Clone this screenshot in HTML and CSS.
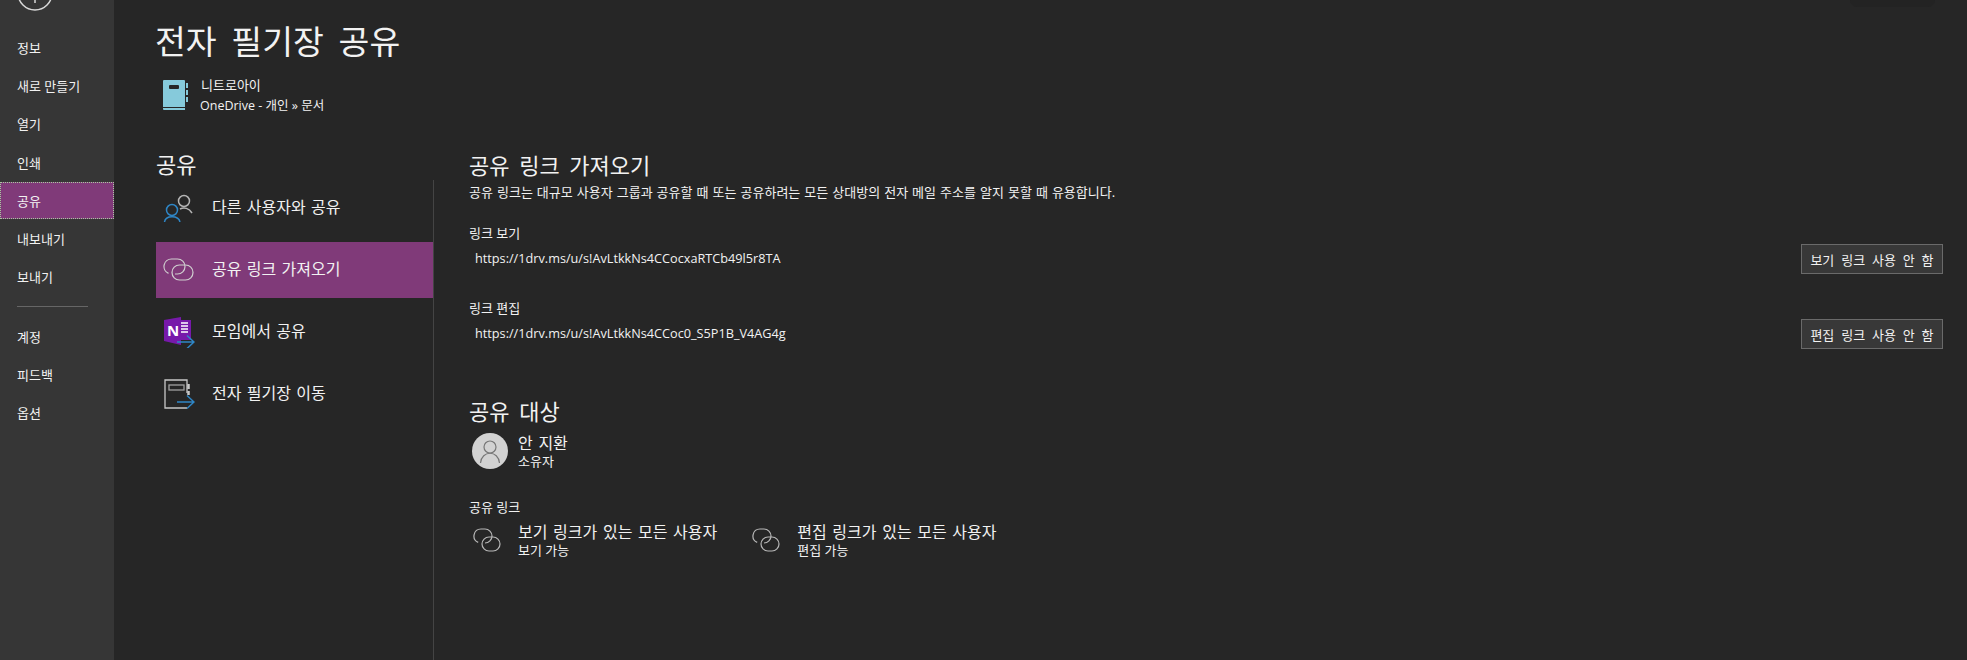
FILE: index.html
```html
<!DOCTYPE html>
<html lang="ko">
<head>
  <meta charset="UTF-8" />
  <title>전자 필기장 공유</title>
  <link rel="stylesheet" href="styles.css">
</head>
<body>

  <aside>
    <svg class="back" width="38" height="11" viewBox="0 0 38 11">
      <circle cx="18" cy="-7" r="17" fill="none" stroke="#d8d8d8" stroke-width="1.5"/>
      <path d="M18 0v3" stroke="#d8d8d8" stroke-width="1.5"/>
    </svg>
    <nav class="nav-top">
      <a>정보</a>
      <a>새로 만들기</a>
      <a>열기</a>
      <a>인쇄</a>
      <a class="selected">공유</a>
      <a>내보내기</a>
      <a>보내기</a>
    </nav>
    <hr>
    <nav class="nav-bottom">
      <a>계정</a>
      <a>피드백</a>
      <a>옵션</a>
    </nav>
  </aside>

  <main>
    <div class="top-tab"></div>
    <h1>전자 필기장 공유</h1>

    <div class="notebook">
      <svg width="26" height="32" viewBox="0 0 26 32">
        <path d="M2 1h20a1 1 0 0 1 1 1v26H1V2a1 1 0 0 1 1-1z" fill="#86cadb"/>
        <rect x="7" y="6" width="10" height="4" rx="1" fill="#262626"/>
        <path d="M1 29h22v2H2a1 1 0 0 1-1-1z" fill="#86cadb"/>
        <path d="M1 28.5h22" stroke="#262626"/>
        <path d="M25 4v5M25 11v5M25 18v5" stroke="#86cadb" stroke-width="2"/>
      </svg>
      <div>
        <p>니트로아이</p>
        <p class="notebook-path">OneDrive - 개인 » 문서</p>
      </div>
    </div>

    <div class="columns">
      <section class="options">
        <h2>공유</h2>
        <div class="option-list">
          <div class="option">
            <svg width="32" height="28" viewBox="0 0 32 28">
              <circle cx="21" cy="7" r="5.5" fill="none" stroke="#b4b4b4" stroke-width="1.5"/>
              <path d="M17 15c4-2 9-1 12 4" fill="none" stroke="#b4b4b4" stroke-width="1.5"/>
              <circle cx="9" cy="16" r="5.5" fill="none" stroke="#2f86c6" stroke-width="1.5"/>
              <path d="M1.5 28c1-7 14-7 15.500 0" fill="none" stroke="#2f86c6" stroke-width="1.5"/>
            </svg>
            <span>다른 사용자와 공유</span>
          </div>
          <div class="option active">
            <svg width="32" height="24" viewBox="0 0 32 24">
              <path d="M12 16h2.500a7.500 7.500 0 0 0 0-15h-6a7.500 7.500 0 0 0-3 14.370" fill="none" stroke="#d0d0d0" stroke-width="1.2"/>
              <rect x="9" y="7" width="21" height="15" rx="7.500" fill="none" stroke="#d0d0d0" stroke-width="1.2"/>
            </svg>
            <span>공유 링크 가져오기</span>
          </div>
          <div class="option">
            <svg width="32" height="32" viewBox="0 0 32 32">
              <path d="M1 4l17-3v28L1 25z" fill="#7719aa"/>
              <path d="M18 4h10v20H18z" fill="#7719aa"/>
              <path d="M18 7h7M18 10h7M18 13h7M18 16h7" stroke="#fff" stroke-width="1.5"/>
              <text x="4" y="20" class="note-n">N</text>
              <path d="M14 26h16M24 19.500l7 6.500-7 6.500" fill="none" stroke="#2f86c6" stroke-width="1.500"/>
            </svg>
            <span>모임에서 공유</span>
          </div>
          <div class="option">
            <svg width="32" height="32" viewBox="0 0 32 32">
              <path d="M24 15V2H2v28h22" fill="none" stroke="#c8c8c8" stroke-width="1.3"/>
              <rect x="6" y="7" width="15" height="5" fill="none" stroke="#a0a0a0" stroke-width="1.3"/>
              <path d="M25.500 6v5M25.500 13v4" stroke="#c8c8c8" stroke-width="2.500"/>
              <path d="M14 24h16M24 17.500l7 6.500-7 6.500" fill="none" stroke="#2f86c6" stroke-width="1.500"/>
            </svg>
            <span>전자 필기장 이동</span>
          </div>
        </div>
      </section>

      <section class="detail">
        <h2>공유 링크 가져오기</h2>
        <p class="desc">공유 링크는 대규모 사용자 그룹과 공유할 때 또는 공유하려는 모든 상대방의 전자 메일 주소를 알지 못할 때 유용합니다.</p>

        <div class="field">
          <label>링크 보기</label>
          <div class="field-row">
            <span class="url">https://1drv.ms/u/s!AvLtkkNs4CCocxaRTCb49l5r8TA</span>
            <button>보기 링크 사용 안 함</button>
          </div>
        </div>
        <div class="field">
          <label>링크 편집</label>
          <div class="field-row">
            <span class="url">https://1drv.ms/u/s!AvLtkkNs4CCoc0_S5P1B_V4AG4g</span>
            <button>편집 링크 사용 안 함</button>
          </div>
        </div>

        <h2 class="share-title">공유 대상</h2>
        <div class="person">
          <svg width="36" height="36" viewBox="0 0 36 36">
            <circle cx="18" cy="18" r="18" fill="#d2d2d2"/>
            <circle cx="18" cy="14" r="6" fill="none" stroke="#777" stroke-width="1.2"/>
            <path d="M8.500 30c1-13 18-13 19 0" fill="none" stroke="#777" stroke-width="1.2"/>
          </svg>
          <div class="two-line">
            <p>안 지환</p>
            <small>소유자</small>
          </div>
        </div>

        <label class="links-label">공유 링크</label>
        <div class="links">
          <div class="link-item">
            <svg width="28" height="24" viewBox="0 0 28 24">
              <path d="M12 15a7 7 0 0 0 0-14h-4a7 7 0 0 0-2.800 13.420" fill="none" stroke="#b8b8b8" stroke-width="1.2"/>
              <rect x="9" y="9" width="18" height="14" rx="7" fill="none" stroke="#b8b8b8" stroke-width="1.2"/>
            </svg>
            <div class="two-line">
              <p>보기 링크가 있는 모든 사용자</p>
              <small>보기 가능</small>
            </div>
          </div>
          <div class="link-item">
            <svg width="28" height="24" viewBox="0 0 28 24">
              <path d="M12 15a7 7 0 0 0 0-14h-4a7 7 0 0 0-2.800 13.420" fill="none" stroke="#b8b8b8" stroke-width="1.2"/>
              <rect x="9" y="9" width="18" height="14" rx="7" fill="none" stroke="#b8b8b8" stroke-width="1.2"/>
            </svg>
            <div class="two-line">
              <p>편집 링크가 있는 모든 사용자</p>
              <small>편집 가능</small>
            </div>
          </div>
        </div>
      </section>
    </div>
  </main>

</body>
</html>
```

FILE: styles.css
```css
* { box-sizing: border-box; }
html, body { height: 100%; }
body {
  margin: 0;
  display: flex;
  height: 100vh;
  overflow: hidden;
  background: #262626;
  color: #f2f2f2;
  font-family: "Open Sans", "Noto Sans CJK KR", sans-serif;
  font-size: 13px;
}
h1, h2, p { margin: 0; font-weight: 400; }

aside {
  width: 114px;
  flex: none;
  background: #363636;
}
.back { display: block; margin-left: 17px; margin-bottom: 18px; }
aside a {
  display: block;
  height: 38.2px;
  line-height: 38px;
  padding-left: 17px;
  font-size: 13px;
}
aside a.selected {
  height: 37px;
  margin-bottom: 1.2px;
  background: #803a79;
  outline: 1px dotted #a9c9a0;
  outline-offset: -1px;
}
aside hr {
  border: none;
  height: 1px;
  background: #666;
  width: 71px;
  margin: 10px 0 11px 17px;
}
.nav-bottom a { height: 38px; }

main {
  flex: 1;
  position: relative;
  padding: 20px 24px 0 41px;
  display: flex;
  flex-direction: column;
}
.top-tab {
  position: absolute;
  top: 0;
  right: 32px;
  width: 85px;
  height: 7px;
  background: #232323;
  border-radius: 0 0 8px 8px;
}
h1 {
  font-size: 33.5px;
  line-height: 42px;
  word-spacing: .18em;
}

.notebook {
  display: flex;
  gap: 13px;
  margin-top: 12px;
  margin-left: 7px;
  height: 42px;
  align-items: center;
}
.notebook p { line-height: 21px; }
.notebook p:first-child { padding-top: 1px; }
.notebook-path { font-size: 12.5px; margin-top: -1px; margin-left: -1px; }

.columns {
  flex: 1;
  display: flex;
  margin-top: 35px;
  margin-left: 1px;
}
h2 {
  font-size: 22px;
  line-height: 28px;
  word-spacing: .18em;
}
.options {
  width: 278px;
  flex: none;
  display: flex;
  flex-direction: column;
}
.options h2 { margin-top: -1px; margin-bottom: 2px; }
.option-list {
  flex: 1;
  display: flex;
  flex-direction: column;
  gap: 6px;
  border-right: 1px solid #444;
}
.option {
  height: 56px;
  padding-left: 7px;
  display: flex;
  align-items: center;
  gap: 17px;
  font-size: 16px;
  word-spacing: 1.2px;
}
.option svg { flex: none; }
.option span { padding-bottom: 4px; }
.option.active { background: #803a79; }
.note-n { font-family: "Open Sans", sans-serif; font-size: 15px; font-weight: 700; fill: #fff; }

.detail {
  flex: 1;
  padding-left: 35px;
}
.desc {
  margin-top: 3px;
  line-height: 20px;
  word-spacing: .66px;
}
.field { margin-top: 21px; }
.field + .field { margin-top: 24px; }
.field label { display: block; line-height: 20px; }
.field-row {
  display: flex;
  justify-content: space-between;
  align-items: center;
  height: 30px;
  margin-top: 1px;
  padding-left: 6px;
}
.url { font-size: 12.7px; padding-bottom: 2px; }
button {
  width: 142px;
  height: 30px;
  background: #383838;
  border: 1px solid #6a6a6a;
  color: #f2f2f2;
  font-family: inherit;
  font-size: 13px;
  word-spacing: 3.5px;
  padding: 0;
}

.share-title { margin-top: 48px; }
.person {
  display: flex;
  gap: 10px;
  margin: 8px 0 0 3px;
  height: 36px;
  align-items: center;
}
.two-line p { font-size: 16px; line-height: 19px; word-spacing: 1.5px; }
.two-line small { display: block; font-size: 13px; line-height: 16px; }
.links-label { display: block; margin-top: 28px; line-height: 20px; }
.links {
  display: flex;
  margin-top: 5px;
  padding-left: 4px;
  gap: 35px;
}
.link-item {
  display: flex;
  align-items: center;
  gap: 17px;
  height: 36px;
}
```
